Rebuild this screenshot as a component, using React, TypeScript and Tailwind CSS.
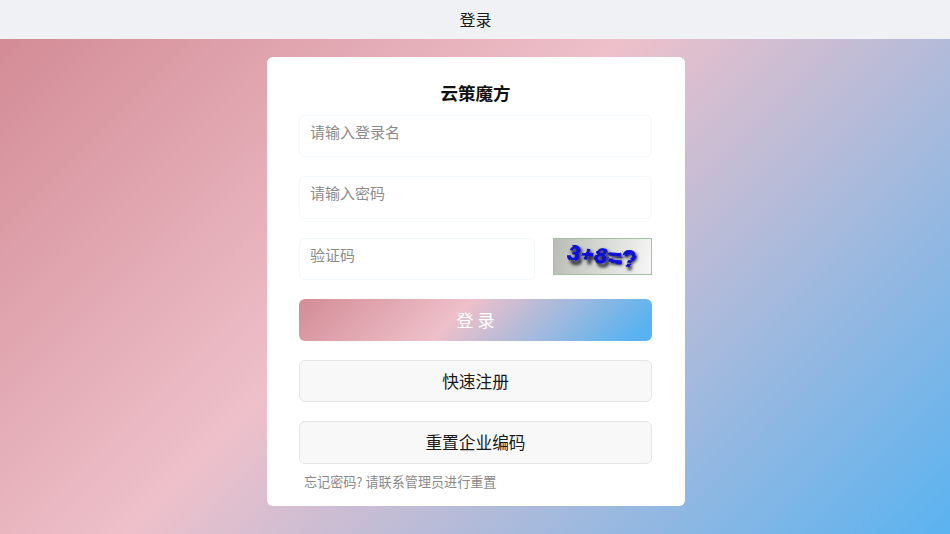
const font = "font-['Noto_Sans_CJK_SC','Liberation_Sans',sans-serif]";

function Captcha() {
  return (
    <div className="h-[37px] w-[99px] border border-[#a3c2a3] bg-[linear-gradient(100deg,#b9bcb4,#d8dad5_50%,#f6f6f6)]">
      <svg width="97" height="35" viewBox="0 0 97 35">
        <defs>
          <filter id="warp" x="-10%" y="-30%" width="120%" height="160%">
            <feTurbulence type="fractalNoise" baseFrequency="0.07" numOctaves="1" seed="12" />
            <feDisplacementMap in="SourceGraphic" scale="9" />
          </filter>
          <filter id="shade" x="-10%" y="-30%" width="120%" height="160%">
            <feGaussianBlur stdDeviation="1.6" />
          </filter>
        </defs>
        <text
          x="16"
          y="28"
          textLength="68"
          fontFamily="Liberation Sans"
          fontWeight="700"
          fontSize="23"
          fill="#33333d"
          stroke="#33333d"
          filter="url(#shade)"
          transform="rotate(5 48 18)"
        >
          3+8=?
        </text>
        <g filter="url(#warp)">
          <text
            x="14"
            y="25"
            textLength="68"
            fontFamily="Liberation Sans"
            fontWeight="700"
            fontSize="23"
            fill="#1010dc"
            stroke="#1010dc"
            strokeWidth="0.9"
            transform="rotate(5 48 18)"
          >
            3+8=?
          </text>
        </g>
      </svg>
    </div>
  );
}

function Field({ placeholder, className }: { placeholder: string; className: string }) {
  return (
    <div className={`rounded-[6px] border border-[#f3f8fc] bg-white px-[10px] pt-[4px] text-[15px] leading-[24px] text-[#8c8c8c] ${className}`}>
      {placeholder}
    </div>
  );
}

export default function App() {
  return (
    <div className={`flex h-[534px] w-[950px] flex-col overflow-hidden ${font}`}>
      <header className="flex h-[39px] items-center justify-center bg-[#eff1f5] pb-[2px] pl-[1px] text-[16px] text-[#1a1a1a]">
        登录
      </header>
      <main className="flex flex-1 justify-center bg-[linear-gradient(135deg,#d38c96_0%,#eec0ca_43%,#5ab3f0_100%)] pt-[18px] pl-[2px]">
        <div className="h-[449px] w-[418px] rounded-[6px] bg-white pr-[33px] pl-[32px]">
          <h1 className="pt-[23px] text-center text-[17.5px] leading-[26px] font-bold text-[#111]">云策魔方</h1>
          <div className="mt-[9px] flex flex-col gap-[19px]">
            <Field placeholder="请输入登录名" className="h-[42.25px]" />
            <Field placeholder="请输入密码" className="h-[42.25px]" />
            <div className="flex h-[42.25px] items-start justify-between">
              <Field placeholder="验证码" className="h-[42.25px] w-[236px]" />
              <Captcha />
            </div>
            <button className="h-[42.25px] rounded-[6px] bg-[linear-gradient(135deg,#d38c96_0%,#eec0ca_44%,#5ab3f0_94%)] text-[17px] text-white">
              登 录
            </button>
            <button className="h-[42.25px] rounded-[6px] border border-[#e5e5e5] bg-[#f8f8f8] text-[16.7px] text-[#1a1a1a]">
              快速注册
            </button>
            <button className="h-[42.25px] rounded-[6px] border border-[#e5e5e5] bg-[#f8f8f8] text-[16.7px] text-[#1a1a1a]">
              重置企业编码
            </button>
          </div>
          <p className="mt-[8px] pl-[5px] text-[13.1px] leading-[20px] text-[#8a8a8a]">忘记密码? 请联系管理员进行重置</p>
        </div>
      </main>
    </div>
  );
}
